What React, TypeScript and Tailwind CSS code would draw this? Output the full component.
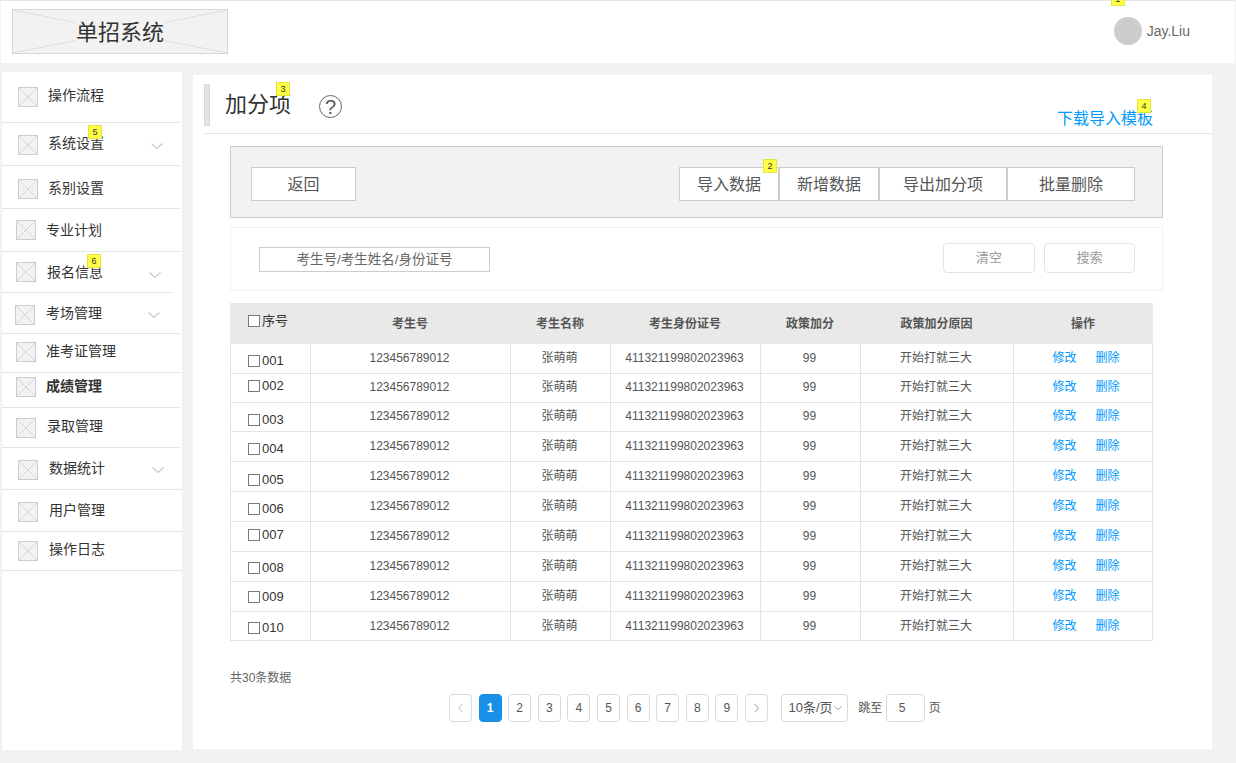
// App.tsx
import { ReactNode } from "react";

type NavItem = {
  label: string;
  height: string;
  pad: string;
  width: string;
  text: string;
  chevron?: string;
  badge?: string;
};

const navItems: NavItem[] = [
  { label: "操作流程", height: "h-[51px]", pad: "pt-[15px] pl-[16px]", width: "w-[178px]", text: "ml-[10px] -mt-[2px]" },
  { label: "系统设置", height: "h-[43px]", pad: "pt-[12px] pl-[16px]", width: "w-[178px]", text: "ml-[10px] -mt-[2px]", chevron: "ml-[47px] mt-[8px]", badge: "5" },
  { label: "系别设置", height: "h-[43px]", pad: "pt-[13px] pl-[16px]", width: "w-[178px]", text: "ml-[10px] -mt-[1px]" },
  { label: "专业计划", height: "h-[43px]", pad: "pt-[11px] pl-[14px]", width: "w-[178px]", text: "ml-[10px]" },
  { label: "报名信息", height: "h-[41px]", pad: "pt-[10px] pl-[14px]", width: "w-[170px]", text: "ml-[11px]", chevron: "ml-[46px] mt-[10px]", badge: "6" },
  { label: "考场管理", height: "h-[41px]", pad: "pt-[12px] pl-[13px]", width: "w-[178px]", text: "ml-[11px] -mt-[2px]", chevron: "ml-[46px] mt-[7px]" },
  { label: "准考证管理", height: "h-[39px]", pad: "pt-[8px] pl-[14px]", width: "w-[178px]", text: "ml-[10px] -mt-[1px]" },
  { label: "成绩管理", height: "h-[35px]", pad: "pt-[4px] pl-[14px]", width: "w-[178px]", text: "ml-[10px] -mt-[1px] font-bold" },
  { label: "录取管理", height: "h-[40px]", pad: "pt-[10px] pl-[14px]", width: "w-[178px]", text: "ml-[11px] -mt-[2px]" },
  { label: "数据统计", height: "h-[42px]", pad: "pt-[12px] pl-[16px]", width: "w-[180px]", text: "ml-[11px] -mt-[2px]", chevron: "ml-[47px] mt-[7px]" },
  { label: "用户管理", height: "h-[42px]", pad: "pt-[12px] pl-[16px]", width: "w-[180px]", text: "ml-[11px] -mt-[2px]" },
  { label: "操作日志", height: "h-[39px]", pad: "pt-[9px] pl-[16px]", width: "w-[180px]", text: "ml-[11px] -mt-[2px]" },
];

// the wireframe rows are hand placed, so each number sits a little differently
const rows = [
  { no: "001", height: "h-[30px]", nudge: "translate-y-[2px]" },
  { no: "002", height: "h-[29px]", nudge: "-translate-y-[2px]" },
  { no: "003", height: "h-[29px]", nudge: "translate-y-[3px]" },
  { no: "004", height: "h-[30px]", nudge: "translate-y-[2px]" },
  { no: "005", height: "h-[30px]", nudge: "translate-y-[3px]" },
  { no: "006", height: "h-[30px]", nudge: "translate-y-[2px]" },
  { no: "007", height: "h-[30px]", nudge: "-translate-y-[2px]" },
  { no: "008", height: "h-[30px]", nudge: "translate-y-[1px]" },
  { no: "009", height: "h-[30px]", nudge: "" },
  { no: "010", height: "h-[28px]", nudge: "translate-y-[2px]" },
];

const cell = "flex items-center justify-center border-r border-[#e4e4e4] pr-[2px]";

function Badge({ n, className }: { n: string; className: string }) {
  return (
    <span
      className={`absolute z-10 flex h-[14px] w-[14px] items-center justify-center border border-[#e4e440] bg-[#ffff44] text-[9px] leading-none font-normal text-[#333] ${className}`}
    >
      {n}
    </span>
  );
}

function ImgIcon() {
  return (
    <svg width="20" height="20" viewBox="0 0 20 20" className="shrink-0">
      <rect x="0.5" y="0.5" width="19" height="19" fill="#f2f2f2" stroke="#cccccc" />
      <path d="M1 1 19 19M19 1 1 19" stroke="#d7d7d7" strokeWidth="1" />
    </svg>
  );
}

function Chevron({ className, size = 12, stroke = "#c9c9c9" }: { className?: string; size?: number; stroke?: string }) {
  return (
    <svg width={size} height={size / 2} viewBox="0 0 12 6" fill="none" className={`shrink-0 ${className ?? ""}`}>
      <path d="M0.5 0.5 6 5.5 11.5 0.5" stroke={stroke} strokeWidth="1.2" />
    </svg>
  );
}

function Check() {
  return <span className="inline-block h-[12px] w-[12px] shrink-0 border border-[#797979] bg-white" />;
}

function ToolButton({ children, className }: { children: ReactNode; className: string }) {
  return (
    <button className={`flex h-[34px] items-center justify-center border border-[#cccccc] bg-white pt-[1px] text-[16px] text-[#555] ${className}`}>
      {children}
    </button>
  );
}

function PageBox({ children, active }: { children: ReactNode; active?: boolean }) {
  return (
    <span
      className={`flex h-[28px] w-[23px] items-center justify-center rounded-[4px] border text-[12px] ${
        active ? "border-[#1890e8] bg-[#1890e8] font-bold text-white" : "border-[#d9d9d9] bg-white text-[#555]"
      }`}
    >
      {children}
    </span>
  );
}

function Sidebar() {
  return (
    <nav className="h-[678px] w-[180px] shrink-0 bg-white text-[14px] text-[#333]">
      {navItems.map((item) => (
        <div key={item.label} className={`flex items-start border-b border-[#e4e4e4] ${item.height} ${item.width} ${item.pad}`}>
          <ImgIcon />
          <span className={`relative leading-[20px] ${item.text}`}>
            {item.label}
            {item.badge && <Badge n={item.badge} className="-top-[8px] left-[40px]" />}
          </span>
          {item.chevron && <Chevron className={item.chevron} />}
        </div>
      ))}
    </nav>
  );
}

function DataTable() {
  return (
    <div className="mt-[12px] w-[923px] text-[12px] text-[#555]">
      <div className="grid h-[41px] grid-cols-[80px_200px_100px_150px_100px_153px_140px] bg-[#e9e9e9] font-bold">
        <div className="flex items-center pb-[5px] pl-[18px] text-[13px] font-normal text-[#333]">
          <Check />
          <span className="ml-[2px]">序号</span>
        </div>
        {["考生号", "考生名称", "考生身份证号", "政策加分", "政策加分原因", "操作"].map((h) => (
          <div key={h} className="flex items-center justify-center">
            {h}
          </div>
        ))}
      </div>
      <div className="border-x border-b border-[#e4e4e4]">
        {rows.map((r, i) => {
          const last = i === rows.length - 1;
          const lift = last ? "" : "pb-[2px]";
          return (
            <div
              key={r.no}
              className={`-mx-px grid grid-cols-[81px_200px_100px_150px_100px_153px_139px] ${r.height} ${
                last ? "" : "border-b border-[#e4e4e4]"
              }`}
            >
              <div className="flex items-center border-r border-l border-[#e4e4e4] pl-[17px] text-[13px] text-[#333]">
                <div className={`flex items-center ${r.nudge}`}>
                  <Check />
                  <span className="ml-[2px]">{r.no}</span>
                </div>
              </div>
              <div className={`${cell} ${lift}`}>123456789012</div>
              <div className={`${cell} ${lift}`}>张萌萌</div>
              <div className={`${cell} ${lift}`}>411321199802023963</div>
              <div className={`${cell} ${lift}`}>99</div>
              <div className={`${cell} ${lift}`}>开始打就三大</div>
              <div className={`flex items-center justify-center gap-[19px] border-r border-[#e4e4e4] pl-[6px] text-[#0099ff] ${lift}`}>
                <span>修改</span>
                <span>删除</span>
              </div>
            </div>
          );
        })}
      </div>
    </div>
  );
}

function Pagination() {
  return (
    <div className="mt-[7px] ml-[219px] flex items-center gap-[6.6px] text-[12px] text-[#555]">
      <PageBox>
        <Chevron size={9} stroke="#b5b5b5" className="rotate-90" />
      </PageBox>
      {[1, 2, 3, 4, 5, 6, 7, 8, 9].map((n) => (
        <PageBox key={n} active={n === 1}>
          {n}
        </PageBox>
      ))}
      <PageBox>
        <Chevron size={9} stroke="#888888" className="-rotate-90" />
      </PageBox>
      <span className="ml-[6px] flex h-[28px] w-[67px] items-center rounded-[4px] border border-[#d9d9d9] pl-[7px] text-[13px]">
        10条/页
        <Chevron size={8} stroke="#888888" className="ml-[1px]" />
      </span>
      <span className="ml-[4px]">跳至</span>
      <span className="-ml-[3px] flex h-[28px] w-[39px] items-center rounded-[4px] border border-[#d9d9d9] pl-[12px]">5</span>
      <span className="-ml-[2.6px]">页</span>
    </div>
  );
}

export default function App() {
  return (
    <div className="flex h-[763px] w-[1236px] flex-col overflow-hidden bg-[#f2f2f2] font-['Liberation_Sans','Noto_Sans_CJK_SC',sans-serif]">
      <header className="mx-px flex h-[63px] shrink-0 items-start border-t border-[#e4e4e4] bg-white pt-[8px] pl-[11px]">
        <div className="relative flex h-[45px] w-[216px] items-center justify-center border border-[#d7d7d7] bg-[#f2f2f2] pt-[2px]">
          <svg className="absolute inset-0 h-full w-full" viewBox="0 0 214 43" preserveAspectRatio="none">
            <path d="M0 0 214 43M214 0 0 43" stroke="#dedede" />
          </svg>
          <span className="relative bg-[#f2f2f2] px-[1px] text-[22px] leading-[28px] text-[#333]">单招系统</span>
        </div>
        <div className="relative mt-[8px] mr-[45px] ml-auto flex items-center gap-[5px] text-[14px] text-[#666]">
          <Badge n="1" className="-top-[25px] -left-[3px]" />
          <span className="h-[28px] w-[28px] rounded-full bg-[#cccccc]" />
          <span>Jay.Liu</span>
        </div>
      </header>

      <div className="mt-[9px] flex items-start pl-[2px]">
        <Sidebar />
        <main className="mt-[3px] ml-[11px] h-[674px] w-[1019px] bg-white">
          <div className="ml-[11px] flex h-[59px] items-start border-b border-[#e4e4e4] pt-[9px]">
            <span className="h-[42px] w-[6px] border border-[#d7d7d7] bg-[#e4e4e4]" />
            <h1 className="relative mt-[7px] ml-[15px] text-[22px] leading-[28px] font-normal text-[#333]">
              加分项
              <Badge n="3" className="-top-[9px] left-[51px]" />
            </h1>
            <span className="mt-[11px] ml-[28px] flex h-[23px] w-[23px] items-center justify-center rounded-full border border-[#666] text-[20px] leading-none text-[#555]">
              ?
            </span>
            <a className="relative mt-[24px] mr-[59px] ml-auto text-[16px] leading-[22px] text-[#0099ff]">
              下载导入模板
              <Badge n="4" className="-top-[9px] left-[80px]" />
            </a>
          </div>

          <div className="ml-[37px] w-[933px]">
            <div className="mt-[12px] flex h-[72px] items-start border border-[#cccccc] bg-[#f2f2f2] pt-[20px] pr-[27px] pl-[20px]">
              <ToolButton className="w-[105px]">返回</ToolButton>
              <div className="relative ml-auto flex">
                <Badge n="2" className="-top-[8px] left-[84px]" />
                <ToolButton className="w-[100px]">导入数据</ToolButton>
                <ToolButton className="w-[100px]">新增数据</ToolButton>
                <ToolButton className="w-[128px]">导出加分项</ToolButton>
                <ToolButton className="w-[128px]">批量删除</ToolButton>
              </div>
            </div>

            <div className="mt-[9px] flex h-[64px] items-center border border-[#f2f2f2] pr-[27px] pl-[28px]">
              <div className="mt-[1px] flex h-[25px] w-[231px] items-center justify-center border border-[#cccccc] pt-[1px] text-[13.5px] text-[#666]">
                考生号/考生姓名/身份证号
              </div>
              <button className="-mt-[2px] ml-auto flex h-[30px] w-[92px] items-center justify-center rounded-[4px] border border-[#e4e4e4] text-[13px] text-[#999]">
                清空
              </button>
              <button className="-mt-[2px] ml-[9px] flex h-[30px] w-[91px] items-center justify-center rounded-[4px] border border-[#e4e4e4] text-[13px] text-[#999]">
                搜索
              </button>
            </div>

            <DataTable />

            <p className="mt-[28px] text-[12px] leading-[18px] text-[#666]">共30条数据</p>
            <Pagination />
          </div>
        </main>
      </div>
    </div>
  );
}
